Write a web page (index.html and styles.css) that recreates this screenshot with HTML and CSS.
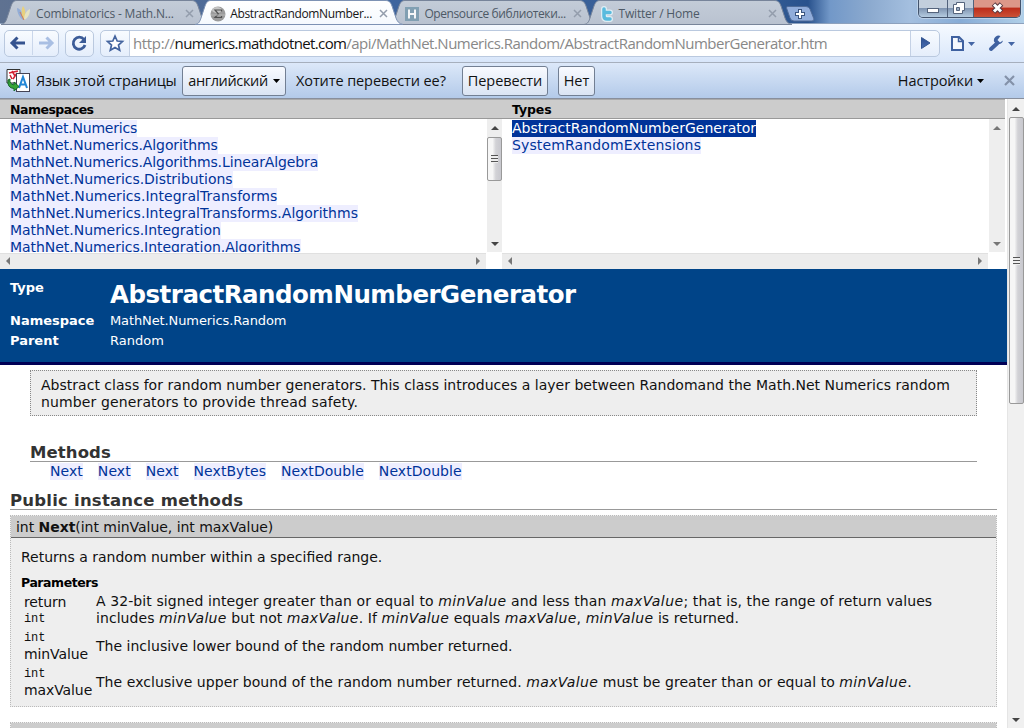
FILE: index.html
```html
<!DOCTYPE html>
<html lang="ru">
<head>
<meta charset="utf-8">
<title>AbstractRandomNumberGenerator</title>
<link rel="stylesheet" href="styles.css">
</head>
<body>
<svg class="defs" width="0" height="0">
  <defs>
    <linearGradient id="idle" x1="0" y1="0" x2="0" y2="1"><stop offset="0" stop-color="#c3ccd8"/><stop offset="1" stop-color="#b9c2d0"/></linearGradient>
    <linearGradient id="front" x1="0" y1="0" x2="0" y2="1"><stop offset="0" stop-color="#ffffff"/><stop offset="1" stop-color="#f5f9fe"/></linearGradient>
    <linearGradient id="blue" x1="0" y1="0" x2="0" y2="1"><stop offset="0" stop-color="#2d4f8f"/><stop offset="1" stop-color="#4a6fb4"/></linearGradient>
    <path id="tab" d="M0 24.5C4 24 5 21 6 18L10 6C11.500 2 13 .5 16 .5H190C194 .5 195.500 2 197 6L201 18C202 21 204 24 208 24.500Z"/>
    <path id="cross" d="M1 1L8 8M8 1L1 8"/>
  </defs>
</svg>
<header class="tabs">
  <div class="tab first">
    <svg class="shape" width="208" height="25"><use href="#tab" fill="url(#idle)" stroke="#77849a"/></svg>
    <svg class="fav" width="16" height="16"><path d="M1 2C5 3 8 8 7 14C4 12 1 7 1 2Z" fill="#8ba9d8"/><path d="M7 0C10 4 10 10 8 14C5 10 5 4 7 0Z" fill="#f0d36e"/><path d="M14 3C14 8 12 12 8 14C8 9 10 5 14 3Z" fill="#ece8c0"/><path d="M4 6L8 14" stroke="#d06d48"/></svg>
    <span class="name t1">Combinatorics - Math.N...</span>
    <svg class="x" width="9" height="9"><use href="#cross"/></svg>
  </div>
  <div class="tab active">
    <svg class="shape" width="208" height="25"><use href="#tab" fill="url(#front)" stroke="#7d92b4"/></svg>
    <svg class="fav" width="16" height="16"><circle cx="8" cy="8" r="7.500" fill="#8b8b8b"/><ellipse cx="7" cy="4" rx="5" ry="3" fill="#bbb"/><path d="M11.500 5.500V4H5L8.500 8L5 11.500H11.500V10" fill="none" stroke="#333" stroke-width="1.200"/><path d="M1 9H15" stroke="#aaa"/></svg>
    <span class="name t2">AbstractRandomNumber...</span>
    <svg class="x" width="9" height="9"><use href="#cross"/></svg>
  </div>
  <div class="tab">
    <svg class="shape" width="208" height="25"><use href="#tab" fill="url(#idle)" stroke="#77849a"/></svg>
    <svg class="fav" width="16" height="16"><path d="M1 1H15V15H1Z" fill="#7799ad"/><path d="M5 3.500V12.500M11 3.500V12.500M5 8H11" stroke="#fff" stroke-width="2"/></svg>
    <span class="name t3">Opensource библиотеки...</span>
    <svg class="x" width="9" height="9"><use href="#cross"/></svg>
  </div>
  <div class="tab">
    <svg class="shape" width="208" height="25"><use href="#tab" fill="url(#idle)" stroke="#77849a"/></svg>
    <svg class="fav" width="16" height="16"><path d="M5 3V10Q5 13 8 13H11M5 6.500H11" fill="none" stroke="#e4f4fa" stroke-width="6" stroke-linecap="round"/><path d="M5 3V10Q5 13 8 13H11M5 6.500H11" fill="none" stroke="#48b9e0" stroke-width="3.500" stroke-linecap="round"/></svg>
    <span class="name t4">Twitter / Home</span>
    <svg class="x" width="9" height="9"><use href="#cross"/></svg>
  </div>
  <svg class="plus" width="29" height="16"><path d="M1 .5H20Q23 .5 24 3L28 13Q28 15 26 15H8Q5 15 4 12L.5 2Z" fill="#91addb" stroke="#4f6b98"/><path d="M14 3V13M9 8H19" stroke="#3b5580" stroke-width="4"/><path d="M14 4V12M10 8H18" stroke="#fff" stroke-width="2"/></svg>
  <div class="winbtns">
    <i class="min"><svg width="28" height="17"><rect x="8.500" y="8.500" width="11" height="4" fill="#fff" stroke="#55647c"/></svg></i>
    <i class="max"><svg width="26" height="17"><path d="M8.500 2.500H16.500V10.500H14.500V13.500H5.500V4.500H8.500Z" fill="#fff" stroke="#55647c"/><path d="M8.500 7.500H11.500V10.500H8.500Z" fill="#9aabc2" stroke="#55647c"/></svg></i>
    <i class="close"><svg width="47" height="17"><path d="M19.500 4L27.500 12M27.500 4L19.500 12" stroke="#5a3940" stroke-width="5"/><path d="M20 4.500L27 11.500M27 4.500L20 11.500" stroke="#fff" stroke-width="3"/></svg></i>
  </div>
</header>
<nav class="toolbar">
  <div class="group history">
    <svg width="27" height="24"><path d="M7 12H20M12.500 6.500L7 12L12.500 17.500" fill="none" stroke="#35538f" stroke-width="3"/></svg>
    <svg class="fwd" width="27" height="24"><path d="M6 12H19M13.500 6.500L19 12L13.500 17.500" fill="none" stroke="#a9bfe3" stroke-width="3"/></svg>
  </div>
  <div class="group reload"><svg width="27" height="24"><path d="M18 8.500A6 6 0 1 0 19 14" fill="none" stroke="#3c5c98" stroke-width="2.800"/><path d="M20 5V12H13Z" fill="#3c5c98"/></svg></div>
  <div class="group omni">
    <svg class="star" width="28" height="24"><path d="M14 5L16.200 10L21.500 10.500L17.500 14L18.700 19.300L14 16.500L9.300 19.300L10.500 14L6.500 10.500L11.800 10Z" fill="#fff" stroke="#45659f" stroke-width="1.700"/></svg>
    <div class="url"><span>http://</span><b>numerics.mathdotnet.com</b><span>/api/MathNet.Numerics.Random/AbstractRandomNumberGenerator.htm</span></div>
    <svg width="28" height="24"><path d="M10.500 6.500L19 12L10.500 17.500Z" fill="url(#blue)" stroke="#345692"/></svg>
  </div>
  <svg class="page" width="26" height="18"><path d="M2 2H9L13 6V15H2Z" fill="#f5f8fd" stroke="#3f61a0" stroke-width="2"/><path d="M8.500 2V6.500H13" fill="none" stroke="#3f61a0" stroke-width="1.500"/><path d="M18 7H25L21.500 11Z" fill="#4466a5"/></svg>
  <svg class="wrench" width="28" height="18"><path d="M3 14L9 8.500" stroke="#3f61a0" stroke-width="4" stroke-linecap="round"/><path d="M12.500 1A4.800 4.800 0 0 0 6 6.500A4.800 4.800 0 0 0 15 5.500L12 7.500L9.500 5Z" fill="#3f61a0"/><path d="M20 7H27L23.500 11Z" fill="#4466a5"/></svg>
</nav>
<section class="infobar">
  <svg class="translate" width="25" height="25"><path d="M1 1.500H14V15H1Z" fill="#fff" stroke="#333"/><path d="M3 5L12 3M4 7L6 11M11 5L7 11M6 3L9 8" stroke="#d32233" stroke-width="1.500"/><rect x="10.500" y="5.500" width="13" height="18" fill="#fff" stroke="#445"/><path d="M13 20L17 9L21 20M14.500 16.500H19.500" fill="none" stroke="#2186d6" stroke-width="2"/><path d="M4 11Q3 16 8 17V14L13 18.500L8 23V20.500Q1 20 2 12Z" fill="#36a537" stroke="#17672a"/></svg>
  <span class="lang">Язык этой страницы</span>
  <span class="btn b1"><span>английский</span><svg width="7" height="4"><path d="M0 0H7L3.500 4Z"/></svg></span>
  <span class="ask">Хотите перевести ее?</span>
  <span class="btn b2"><span>Перевести</span></span>
  <span class="btn b3"><span>Нет</span></span>
  <span class="settings"><span>Настройки</span><svg width="7" height="4"><path d="M0 0H7L3.500 4Z"/></svg></span>
  <svg class="dismiss" width="11" height="11"><path d="M1 1L10 10M10 1L1 10" stroke="#8492a9" stroke-width="2.200"/></svg>
</section>
<div class="viewport">
  <main class="doc">
    <div class="panes">
      <section class="pane">
        <h4>Namespaces</h4>
        <div class="listrow">
          <div class="list">
            <a class="tight">MathNet.Numerics</a>
            <a class="snug">MathNet.Numerics.Algorithms</a>
            <a class="snug">MathNet.Numerics.Algorithms.LinearAlgebra</a>
            <a>MathNet.Numerics.Distributions</a>
            <a class="wide">MathNet.Numerics.IntegralTransforms</a>
            <a class="wide">MathNet.Numerics.IntegralTransforms.Algorithms</a>
            <a>MathNet.Numerics.Integration</a>
            <a>MathNet.Numerics.Integration.Algorithms</a>
          </div>
          <div class="vbar"><i class="arrow up"></i><div class="thumb small"><i class="grip"></i></div><i class="arrow down"></i></div>
        </div>
        <div class="hbar"><i class="arrow left"></i><i class="arrow right"></i></div>
      </section>
      <section class="pane">
        <h4>Types</h4>
        <div class="listrow">
          <div class="list">
            <a class="sel">AbstractRandomNumberGenerator</a>
            <a class="wider">SystemRandomExtensions</a>
          </div>
          <div class="vbar off"><i class="arrow up"></i><i class="arrow down"></i></div>
        </div>
        <div class="hbar"><i class="arrow left"></i><i class="arrow right"></i></div>
      </section>
    </div>
    <section class="hero">
      <b class="kind">Type</b><h1>AbstractRandomNumberGenerator</h1>
      <b>Namespace</b><span class="snug">MathNet.Numerics.Random</span>
      <b>Parent</b><span>Random</span>
    </section>
    <p class="summary"><span>Abstract class for random number generators. This class introduces a layer between Randomand the Math.Net Numerics random</span><br><span class="wider">number generators to provide thread safety.</span></p>
    <h3 class="methods">Methods</h3>
    <div class="links"><a>Next</a><a>Next</a><a>Next</a><a>NextBytes</a><a>NextDouble</a><a>NextDouble</a></div>
    <h3 class="public">Public instance methods</h3>
    <article class="method">
      <div class="sig">int <b>Next</b>(int minValue, int maxValue)</div>
      <p>Returns a random number within a specified range.</p>
      <h5>Parameters</h5>
      <div class="params">
        <div class="key">return<code>int</code></div>
        <div class="desc">A 32-bit signed integer greater than or equal to <i>minValue</i> and less than <i>maxValue</i>; that is, the range of return values<br><span class="second">includes <i>minValue</i> but not <i>maxValue</i>. If <i>minValue</i> equals <i>maxValue</i>, <i>minValue</i> is returned.</span></div>
        <div class="key"><code>int</code>minValue</div>
        <div class="desc plain">The inclusive lower bound of the random number returned.</div>
        <div class="key"><code>int</code>maxValue</div>
        <div class="desc third">The exclusive upper bound of the random number returned. <i>maxValue</i> must be greater than or equal to <i>minValue</i>.</div>
      </div>
    </article>
    <article class="method next"><div class="sig"></div></article>
  </main>
  <aside class="pagebar"><i class="arrow up"></i><div class="thumb big"><i class="grip"></i></div><i class="arrow down"></i></aside>
</div>
</body>
</html>
```
FILE: styles.css
```css
* { box-sizing: border-box; }
body { margin: 0; width: 1024px; height: 728px; overflow: hidden; display: flex; flex-direction: column; background: #fff; font-family: Verdana, "DejaVu Sans", sans-serif; font-size: 14px; color: #111; }
svg { display: block; flex: none; }
i { display: block; }
.defs { position: absolute; }

/* window frame and tabs */
.tabs { height: 24px; flex: none; display: flex; padding-left: 1px; position: relative; background: linear-gradient(90deg, #5f7291 0, #3f659e 390px, #335b93 770px, #29528d 808px, #7298c8 830px, #8caacf 870px, #a4bfdf 910px, #87acd6 960px, #b0cfe8 1024px); border-bottom: 1px solid #8da1bd; font-family: "Open Sans", "Noto Sans", sans-serif; font-size: 12px; color: #4d5966; }
.tab { width: 194.200px; height: 25px; flex: none; position: relative; display: flex; align-items: center; padding: 2px 0 0 15px; }
.shape { position: absolute; left: 0; top: 0; z-index: -1; }
.tab { z-index: 1; isolation: isolate; }
.tab.active { z-index: 2; color: #151515; }
.fav { margin-right: 4px; opacity: .85; }
.name { width: 149px; white-space: nowrap; }
.t1 { letter-spacing: -.17px; }
.t2 { letter-spacing: -.34px; }
.t3 { letter-spacing: -.4px; }
.t4 { letter-spacing: -.2px; }
.x { stroke: #939dac; stroke-width: 1.500; }
.plus { margin: 6px 0 0 8px; z-index: 2; }
.winbtns { margin: 0 3px 0 auto; width: 103px; height: 18px; display: flex; border: 1px solid #43536c; border-top: 0; border-radius: 0 0 5px 5px; overflow: hidden; box-shadow: 0 0 0 1px #ccdcefaa; }
.min, .max { background: linear-gradient(#c3cfdd 0 45%, #8095b2 50%, #b5cce0); border-right: 1px solid #51627c; }
.min { width: 29px; }
.max { width: 26px; }
.close { width: 47px; background: linear-gradient(#dc9789 0 40%, #bd2e1c 50%, #ca5137); }

.toolbar { height: 39px; flex: none; display: flex; align-items: flex-start; padding: 6px 8px 0 4px; background: linear-gradient(#f6faff, #d8e6fa); border-bottom: 1px solid #a6afbd; }
.group { height: 27px; border: 1px solid #bac9df; border-radius: 5px; display: flex; background: linear-gradient(#f8fbff, #e5eefb); overflow: hidden; }
.history { width: 55px; }
.fwd { border-left: 1px solid #cad7eb; }
.reload { width: 29px; margin-left: 6px; }
.omni { width: 840px; margin-left: 6px; }
.url { flex: 1; background: #fff; border-left: 1px solid #c4d1e5; border-right: 1px solid #c4d1e5; padding-left: 3px; line-height: 25px; font-family: "Open Sans", "Noto Sans", sans-serif; font-size: 15px; letter-spacing: -.35px; color: #888; white-space: nowrap; }
.url b { color: #111; font-weight: 400; letter-spacing: -.63px; }
.url b + span { letter-spacing: -.51px; }
.page { margin: 5px 0 0 10px; }
.wrench { margin: 5px 0 0 auto; }

.infobar { height: 36px; flex: none; display: flex; align-items: center; padding: 0 9px 0 6px; background: linear-gradient(#dce8f9, #b3cae9); border-bottom: 1px solid #888f9c; font-family: "Open Sans", "Noto Sans", sans-serif; font-size: 14.500px; white-space: nowrap; color: #111; }
.lang { width: 146px; margin-left: 5px; letter-spacing: -.17px; }
.ask { width: 166px; letter-spacing: -.1px; }
.btn { height: 30px; display: flex; align-items: center; justify-content: center; gap: 5px; border: 1px solid #727f93; border-radius: 3px; background: linear-gradient(#f8faff, #dae4f3); }
.b1 { width: 104px; margin-right: 10px; letter-spacing: -.35px; }
.b2 { width: 86px; margin-right: 10px; letter-spacing: -.1px; }
.b3 { width: 37px; }
.settings { margin-left: auto; display: flex; align-items: center; gap: 4px; margin-right: 20px; letter-spacing: -.1px; }

.viewport { display: flex; height: 629px; }
.doc { width: 1007px; height: 629px; overflow: hidden; flex: none; }
.panes { display: flex; width: 1005px; height: 170px; }
.pane { width: 502px; }
.pane + .pane { width: 503px; }
h1, h3, h4, h5, p { margin: 0; }
h4 { height: 20px; background: #ccc; border-top: 1px solid #aaa; border-bottom: 1px solid #999; padding-left: 10px; font-size: 12.500px; line-height: 19px; color: #000; letter-spacing: -.5px; }
.pane + .pane h4 { letter-spacing: -.1px; }
.listrow { display: flex; height: 133px; }
.list { flex: 1; padding: 1px 0 0 10px; overflow: hidden; display: flex; flex-direction: column; align-items: flex-start; }
a { color: #039; background: #eef; line-height: 17px; height: 17px; flex: none; white-space: nowrap; letter-spacing: -.04px; }
.tight { letter-spacing: -.2px; }
.snug { letter-spacing: -.11px; }
.wide { letter-spacing: .04px; }
.wider { letter-spacing: .13px; }
.sel { background: #039; color: #fff; letter-spacing: 0; }
.vbar { width: 15px; background: #eee; display: flex; flex-direction: column; align-items: center; padding: 7px 0 6px; }
.off { width: 16px; }
.hbar { width: 486px; height: 16px; margin-top: 1px; background: #ececec; border-top: 1px solid #e0e0e0; display: flex; justify-content: space-between; align-items: center; padding: 0 6px 2px; }
.arrow { width: 0; height: 0; border: 4px solid transparent; flex: none; }
.up { border-top: 0; border-bottom: 4px solid #444; }
.down { border-bottom: 0; border-top: 4px solid #444; margin-top: auto; }
.left { border-left: 0; border-right: 4px solid #777; }
.right { border-right: 0; border-left: 4px solid #777; }
.off .up { border-bottom-color: #777; }
.off .down { border-top-color: #777; }
.thumb { width: 15px; border: 1px solid #999; border-radius: 2px; background: linear-gradient(90deg, #f6f6f6 0 35%, #d2d2d6 60%, #c8c8ce); display: flex; align-items: center; justify-content: center; }
.small { height: 44px; margin-top: 7px; }
.grip { width: 7px; height: 8px; background: repeating-linear-gradient(#555 0 1px, #eee 1px 3px); }
.pagebar { width: 17px; padding: 8px 0 6px; background: #f0f0f0; display: flex; flex-direction: column; align-items: center; border-left: 1px solid #e5e5e5; }
.big { height: 287px; margin-top: 6px; }

.hero { height: 96px; background: #048; border-bottom: 3px solid #005; color: #fff; display: grid; grid-template-columns: 100px 1fr; grid-template-rows: 32px 20px 20px; padding: 10px 0 0 10px; font-size: 13px; line-height: 19px; align-content: start; }
.kind { line-height: 17px; }
.hero h1 { font-size: 24.500px; line-height: 31px; letter-spacing: -.5px; }
.summary { margin: 5px 30px 0; height: 46px; padding: 6px 10px; background: #eee; border: 1px dotted #888; line-height: 17px; white-space: nowrap; letter-spacing: .016px; }
h3 { color: #333; border-bottom: 1px solid #999; font-size: 16.500px; white-space: nowrap; letter-spacing: .1px; }
.methods { margin: 24px 30px 0; height: 22px; line-height: 25px; }
.links { display: flex; gap: 15px; padding: 1px 0 0 50px; height: 18px; }
.links a { letter-spacing: .06px; }
.public { margin: 8px 10px 0; height: 22px; line-height: 26px; letter-spacing: .22px; }
.method { margin: 5px 10px 0; height: 192px; background: #eee; border: 1px dotted #bbb; line-height: 17px; white-space: nowrap; }
.sig { height: 22px; background: #ccc; border-bottom: 1px solid #666; padding-left: 5px; line-height: 22px; letter-spacing: -.04px; }
.method p { padding: 11px 0 0 10px; }
h5 { padding: 9px 0 0 10px; font-size: 12.500px; line-height: 16px; letter-spacing: -.45px; color: #000; }
.params { display: grid; grid-template-columns: 72px 1fr; grid-template-rows: 36px 36px 36px; padding: 1px 0 0 13px; align-items: center; }
.desc { letter-spacing: .09px; }
.plain { letter-spacing: .02px; }
.third { letter-spacing: .07px; }
.params i { display: inline; letter-spacing: .42px; }
.second { letter-spacing: .06px; }
.params .second i, .params .third i { letter-spacing: .34px; }
.key { line-height: 17px; letter-spacing: -.1px; }
code { display: block; font-family: "Liberation Mono", "DejaVu Sans Mono", monospace; font-size: 12px; line-height: 16px; }
.next { margin-top: 15px; height: 40px; }
```
